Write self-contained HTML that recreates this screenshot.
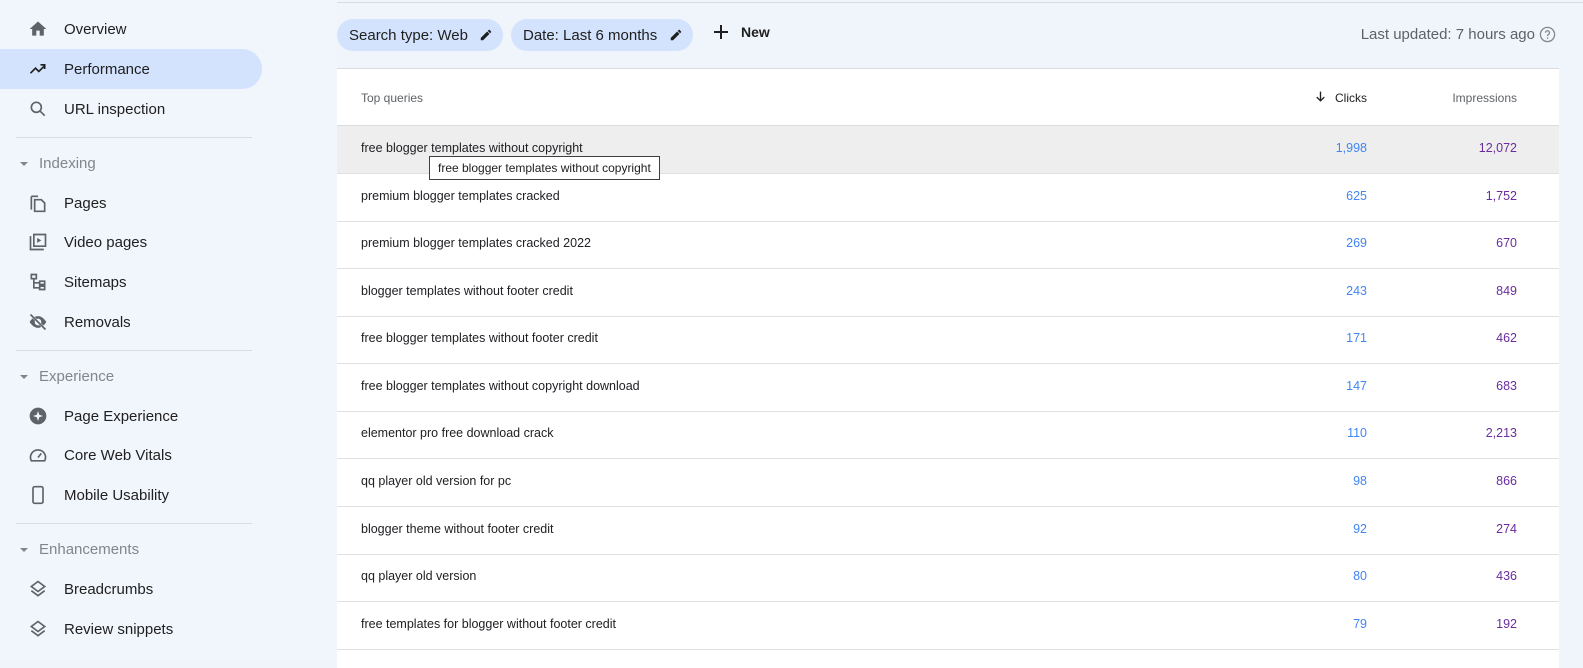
<!DOCTYPE html>
<html><head><meta charset="utf-8"><style>
*{box-sizing:border-box;margin:0;padding:0}
body{width:1583px;height:659px;overflow:hidden;background:#f0f4fb;font-family:"Liberation Sans",Arial,sans-serif;position:relative}
.side{position:absolute;left:0;top:0;width:337px;height:659px;background:#f1f5fc}
.it{position:absolute;left:0;height:40px;width:262px;display:flex;align-items:center;font-size:15px;color:#1f1f1f}
.it.act{background:#d3e3fd;border-radius:0 20px 20px 0}
.it svg{position:absolute;left:28px;width:20px;height:20px}
.it span{position:absolute;left:64px}
.sec{position:absolute;left:20px;font-size:15px;color:#80868b;display:flex;align-items:center}
.sec:before{content:"";border-left:4px solid transparent;border-right:4px solid transparent;border-top:4px solid #80868b;margin-right:11px}
.div{position:absolute;left:16px;width:236px;border-top:1px solid #dadce0}
.topline{position:absolute;left:337px;right:0;top:2px;border-top:1px solid #dadce0}
.chip{position:absolute;top:19px;height:32px;border-radius:16px;background:#d3e3fd;font-size:15px;color:#1f1f1f;display:flex;align-items:center;padding-left:12px}
.chip svg{position:absolute;right:10px;top:9px}
.new{position:absolute;left:713px;top:24px;font-size:14px;color:#1f1f1f;font-weight:bold;display:flex;align-items:center}
.upd{position:absolute;right:48px;top:26px;font-size:15px;color:#5f6368}
.tbl{position:absolute;left:337px;top:68px;width:1222px;height:600px;background:#fff;border-top:1px solid #dadce0}
.hd{position:absolute;top:0;height:57px;width:100%;border-bottom:1px solid #dadce0;font-size:12px;color:#5f6368}
.row{position:absolute;left:0;width:100%;height:48px;border-bottom:1px solid #e0e0e0;font-size:12.5px;color:#202124}
.q{position:absolute;left:24px;top:15px}
.c{position:absolute;right:192px;top:15px;color:#4285f4}
.im{position:absolute;right:42px;top:15px;color:#6a2c9e}
.tip{position:absolute;left:429px;top:156px;height:24px;border:1px solid #3c4043;background:#fff;font-size:12px;color:#202124;padding:4px 8px 0 8px;z-index:2}
</style></head><body>
<div class="side">
<div class="it" style="top:9px"><svg viewBox="0 0 24 24"><path fill="#5f6368" d="M10 20v-6h4v6h5v-8h3L12 3 2 12h3v8z"/></svg><span>Overview</span></div>
<div class="it act" style="top:49px"><svg viewBox="0 0 24 24"><path fill="none" stroke="#1f1f1f" stroke-width="2" d="M3 17l6-6 4 4 7-7M15 7h5v5"/></svg><span>Performance</span></div>
<div class="it" style="top:89px"><svg viewBox="0 0 24 24"><circle cx="10" cy="10" r="6" fill="none" stroke="#5f6368" stroke-width="2"/><path stroke="#5f6368" stroke-width="2" d="M14.5 14.5L20 20"/></svg><span>URL inspection</span></div>
<div class="div" style="top:137px"></div>
<div class="sec" style="top:155px">Indexing</div>
<div class="it" style="top:183px"><svg viewBox="0 0 24 24"><path fill="none" stroke="#5f6368" stroke-width="2" d="M4 4v16M4 4h8M8 8h8l4 4v10H8z"/></svg><span>Pages</span></div>
<div class="it" style="top:222px"><svg viewBox="0 0 24 24"><path fill="none" stroke="#5f6368" stroke-width="2" d="M3 5v16h16M7 3h14v14H7z"/><path fill="#5f6368" d="M11 7v6l5-3z"/></svg><span>Video pages</span></div>
<div class="it" style="top:262px"><svg viewBox="0 0 24 24"><path fill="none" stroke="#5f6368" stroke-width="2" d="M4 3h6v5H4zM14 11h6v4h-6zM14 17h6v4h-6zM7 8v11h7M7 13h7"/></svg><span>Sitemaps</span></div>
<div class="it" style="top:302px"><svg viewBox="0 0 24 24"><path fill="#5f6368" d="M12 5C6 5 2 12 2 12s4 7 10 7 10-7 10-7-4-7-10-7zm0 11a4 4 0 110-8 4 4 0 010 8z"/><path stroke="#f1f5fc" stroke-width="3" d="M3 3l18 18"/><path stroke="#5f6368" stroke-width="2" d="M3 3l18 18"/></svg><span>Removals</span></div>
<div class="div" style="top:350px"></div>
<div class="sec" style="top:368px">Experience</div>
<div class="it" style="top:396px"><svg viewBox="0 0 24 24"><circle cx="12" cy="12" r="10" fill="#5f6368"/><path fill="#f1f5fc" d="M12 6l1.5 4.5L18 12l-4.5 1.5L12 18l-1.5-4.5L6 12l4.5-1.5z"/></svg><span>Page Experience</span></div>
<div class="it" style="top:435px"><svg viewBox="0 0 24 24"><path fill="none" stroke="#5f6368" stroke-width="2" d="M4 19a9 9 0 1116 0zM12 15l4-5"/></svg><span>Core Web Vitals</span></div>
<div class="it" style="top:475px"><svg viewBox="0 0 24 24"><rect x="6" y="2" width="12" height="20" rx="2" fill="none" stroke="#5f6368" stroke-width="2"/></svg><span>Mobile Usability</span></div>
<div class="div" style="top:523px"></div>
<div class="sec" style="top:541px">Enhancements</div>
<div class="it" style="top:569px"><svg viewBox="0 0 24 24"><path fill="none" stroke="#5f6368" stroke-width="2" d="M12 3l8 6-8 6-8-6zM4 14l8 6 8-6"/></svg><span>Breadcrumbs</span></div>
<div class="it" style="top:609px"><svg viewBox="0 0 24 24"><path fill="none" stroke="#5f6368" stroke-width="2" d="M12 3l8 6-8 6-8-6zM4 14l8 6 8-6"/></svg><span>Review snippets</span></div>
</div>
<div class="topline"></div>
<div class="chip" style="left:337px;width:166px">Search type: Web<svg width="14" height="14" viewBox="0 0 24 24"><path fill="#1f1f1f" d="M3 17v4h4L18 10l-4-4zM20.7 7.3a1 1 0 000-1.4l-2.6-2.6a1 1 0 00-1.4 0L15 5l4 4z"/></svg></div>
<div class="chip" style="left:511px;width:182px">Date: Last 6 months<svg width="14" height="14" viewBox="0 0 24 24"><path fill="#1f1f1f" d="M3 17v4h4L18 10l-4-4zM20.7 7.3a1 1 0 000-1.4l-2.6-2.6a1 1 0 00-1.4 0L15 5l4 4z"/></svg></div>
<div class="new"><svg width="16" height="16" viewBox="0 0 16 16" style="margin-right:12px"><path stroke="#1f1f1f" stroke-width="2" d="M8 1v14M1 8h14"/></svg>New</div>
<div class="upd">Last updated: 7 hours ago</div>
<svg style="position:absolute;left:1539px;top:26px" width="17" height="17" viewBox="0 0 24 24"><circle cx="12" cy="12" r="10" fill="none" stroke="#80868b" stroke-width="1.8"/><path fill="none" stroke="#80868b" stroke-width="1.8" d="M9.2 9.5a2.8 2.8 0 115 1.7c-1 1-2.2 1.5-2.2 3"/><circle cx="12" cy="17" r="1.1" fill="#80868b"/></svg>
<div class="tbl">
<div class="hd"><span style="position:absolute;left:24px;top:22px">Top queries</span>
<span style="position:absolute;right:192px;top:22px;color:#202124">Clicks</span>
<svg style="position:absolute;left:977px;top:21px" width="13" height="13" viewBox="0 0 24 24"><path fill="none" stroke="#202124" stroke-width="2.5" d="M12 3v17M5 13l7 7 7-7"/></svg>
<span style="position:absolute;right:42px;top:22px">Impressions</span></div>
<div class="row" style="top:57px;background:#eeeeee"><span class="q">free blogger templates without copyright</span><span class="c">1,998</span><span class="im">12,072</span></div>
<div class="row" style="top:105px"><span class="q">premium blogger templates cracked</span><span class="c">625</span><span class="im">1,752</span></div>
<div class="row" style="top:152px"><span class="q">premium blogger templates cracked 2022</span><span class="c">269</span><span class="im">670</span></div>
<div class="row" style="top:200px"><span class="q">blogger templates without footer credit</span><span class="c">243</span><span class="im">849</span></div>
<div class="row" style="top:247px"><span class="q">free blogger templates without footer credit</span><span class="c">171</span><span class="im">462</span></div>
<div class="row" style="top:295px"><span class="q">free blogger templates without copyright download</span><span class="c">147</span><span class="im">683</span></div>
<div class="row" style="top:342px"><span class="q">elementor pro free download crack</span><span class="c">110</span><span class="im">2,213</span></div>
<div class="row" style="top:390px"><span class="q">qq player old version for pc</span><span class="c">98</span><span class="im">866</span></div>
<div class="row" style="top:438px"><span class="q">blogger theme without footer credit</span><span class="c">92</span><span class="im">274</span></div>
<div class="row" style="top:485px"><span class="q">qq player old version</span><span class="c">80</span><span class="im">436</span></div>
<div class="row" style="top:533px"><span class="q">free templates for blogger without footer credit</span><span class="c">79</span><span class="im">192</span></div>
</div>
<div class="tip">free blogger templates without copyright</div>
</body></html>
